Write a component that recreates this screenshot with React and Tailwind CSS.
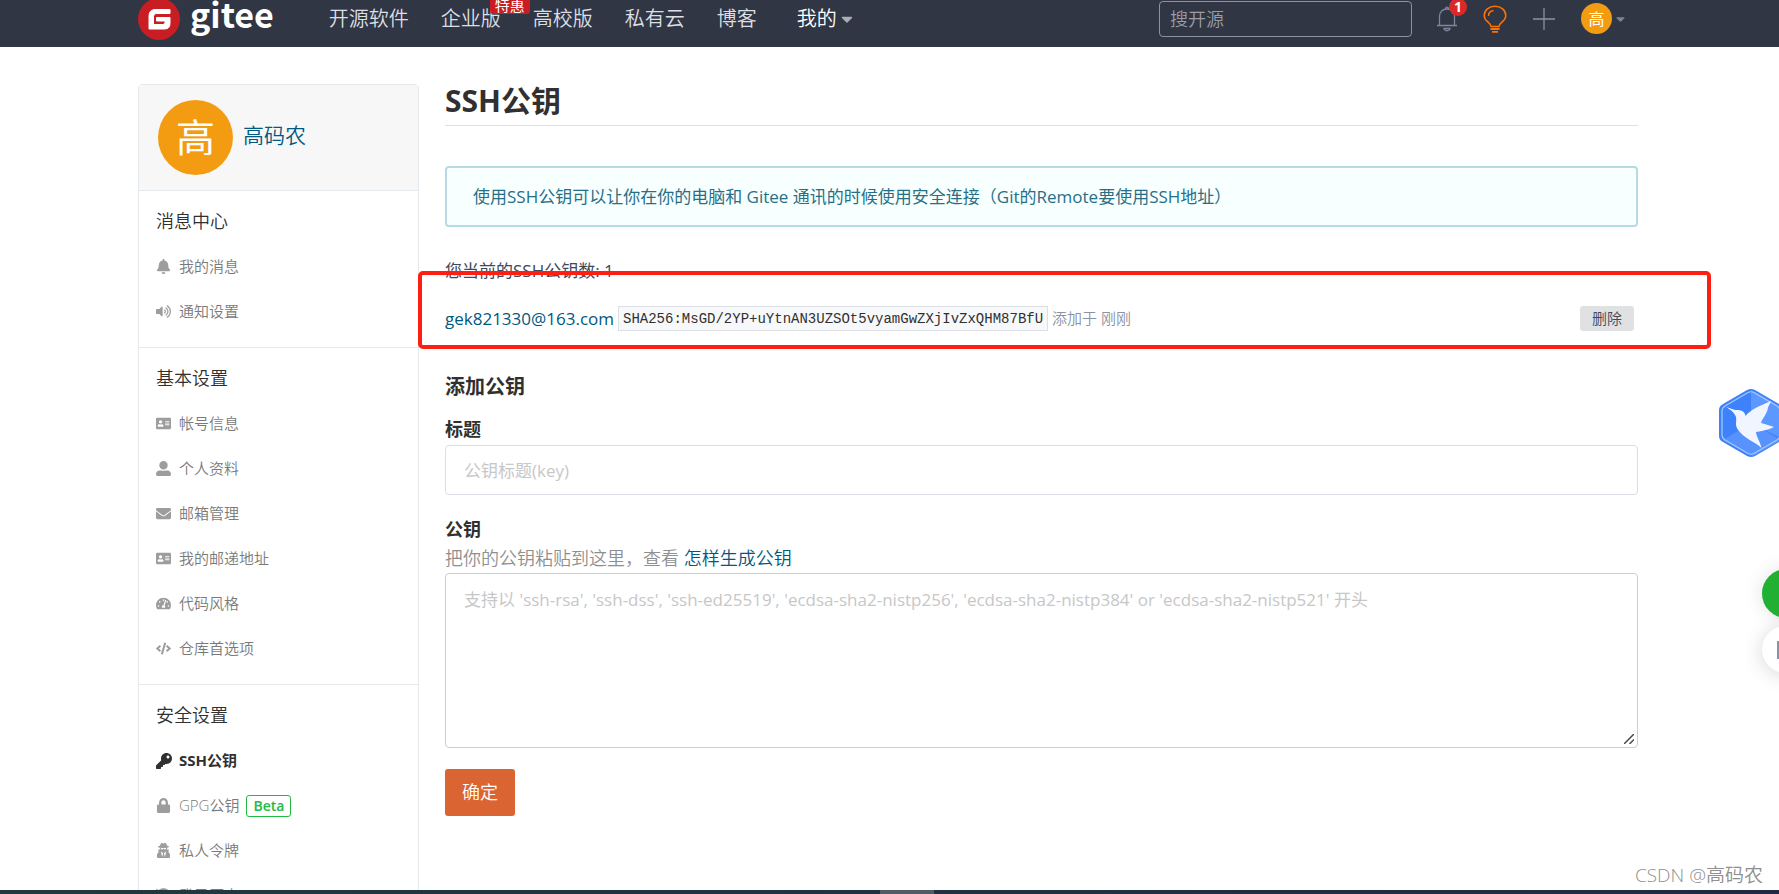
import React from 'react';
import {
    FaBell, FaVolumeUp, FaAddressCard, FaUserAlt, FaEnvelope, FaTachometerAlt,
    FaCode, FaKey, FaLock, FaUserSecret, FaHistory, FaCaretDown,
} from 'react-icons/fa';

const navLinks = ['开源软件', '企业版', '高校版', '私有云', '博客'];

const menuGroups = [
    {
        title: '消息中心',
        items: [
            { label: '我的消息', icon: FaBell },
            { label: '通知设置', icon: FaVolumeUp },
        ],
    },
    {
        title: '基本设置',
        items: [
            { label: '帐号信息', icon: FaAddressCard },
            { label: '个人资料', icon: FaUserAlt },
            { label: '邮箱管理', icon: FaEnvelope },
            { label: '我的邮递地址', icon: FaAddressCard },
            { label: '代码风格', icon: FaTachometerAlt },
            { label: '仓库首选项', icon: FaCode },
        ],
    },
    {
        title: '安全设置',
        items: [
            { label: 'SSH公钥', icon: FaKey, active: true },
            { label: 'GPG公钥', icon: FaLock, beta: true },
            { label: '私人令牌', icon: FaUserSecret },
            { label: '登录历史', icon: FaHistory },
        ],
    },
];

function Logo() {
    return (
        <a href="#" className="flex items-center gap-[10px]">
            <svg viewBox="0 0 42 42" className="h-[42px] w-[42px]">
                <circle cx="21" cy="21" r="21" fill="#c71d23" />
                <path
                    d="M32 11.5H17.5Q11 11.5 11 18V31H26.500Q32 31 32 25.500V19.500H18.500V23H27V24.500Q27 26.500 25 26.500H15.500V18.500Q15.500 15.500 18.500 15.500H32Z"
                    fill="#fff"
                    stroke="#fff"
                    strokeWidth="1"
                    strokeLinejoin="round"
                />
            </svg>
            <span className="pb-[10px] font-['Noto_Sans_CJK_SC',sans-serif] text-[34px] leading-[34px] font-bold text-white">
                gitee
            </span>
        </a>
    );
}

function Header() {
    return (
        <header className="h-[47px] flex-shrink-0 bg-[#303643]">
            <div className="mx-auto flex h-[37px] max-w-[1500px] items-center">
                <Logo />

                <nav className="ml-[55px] flex items-center gap-8 text-[20px] font-[350] text-[#dcdfe4]">
                    {navLinks.map((label) => (
                        <a key={label} href="#" className="relative whitespace-nowrap">
                            {label}
                            {label === '企业版' && (
                                <span className="absolute -right-[29px] -top-[8px] rounded-[3px] bg-[#c71d23] px-[5px] text-[15px] leading-[18px] font-normal text-white">
                                    特惠
                                </span>
                            )}
                        </a>
                    ))}
                    <a href="#" className="flex items-center gap-px pl-2 whitespace-nowrap text-white">
                        我的
                        <FaCaretDown className="text-[18px] text-[#a9adb5]" />
                    </a>
                </nav>

                <div className="ml-auto flex items-center pr-[13px]">
                    <input
                        type="text"
                        aria-label="搜开源"
                        placeholder="搜开源"
                        className="h-[36px] w-[253px] rounded-[4px] border border-[#8c92a4] bg-transparent px-[10px] text-[18px] font-[350] text-white placeholder:text-[#9a9da5]"
                    />

                    {/* Notifications */}
                    <button aria-label="通知" className="relative ml-[24px]">
                        <svg viewBox="0 0 22 26" className="h-[26px] w-[22px]" fill="none" stroke="#7c869c" strokeWidth="1.300">
                            <path d="M1 19.500H21M3.500 19.500V10.500C3.500 6 6.500 3 11 3S18.500 6 18.500 10.500V19.500M9.500 3C9.500 .5 12.500 .5 12.500 3M8 22.500C8.500 25.500 13.500 25.500 14 22.500Z" />
                        </svg>
                        <span className="absolute -right-[9px] -top-[8px] flex h-[18px] w-[18px] items-center justify-center rounded-full bg-[#db2828] text-[14px] leading-none font-bold text-white">
                            1
                        </span>
                    </button>

                    <button aria-label="动态" className="ml-[25px]">
                        <svg viewBox="0 0 24 28" className="h-[28px] w-[24px]" fill="none" stroke="#fe7300" strokeWidth="1.500">
                            <path d="M8 21.500C8 17.500 1.200 16.500 1.200 10.800C1.200 5 6 1.200 12 1.200S22.800 5 22.800 10.800C22.800 16.500 16 17.500 16 21.500Z" />
                            <path d="M5.500 11C5.500 8 7.500 6 10.500 5.500" />
                            <path d="M7.500 24H16.500M9 26.800H15" strokeWidth="1.800" />
                        </svg>
                    </button>

                    <button aria-label="新建" className="ml-[26px]">
                        <svg viewBox="0 0 22 22" className="h-[22px] w-[22px]" stroke="#8c92a4" strokeWidth="1.300">
                            <path d="M0 11H22M11 0V22" />
                        </svg>
                    </button>

                    <button aria-label="帐号" className="ml-[26px] flex items-center gap-1">
                        <span className="flex h-[31px] w-[31px] items-center justify-center rounded-full bg-[#f39c12] text-[16px] text-white">
                            高
                        </span>
                        <FaCaretDown className="w-[9px] text-[14px] text-[#7c8292]" />
                    </button>
                </div>
            </div>
        </header>
    );
}

function Sidebar() {
    return (
        <aside className="w-[281px] flex-shrink-0 rounded-t-[4px] border border-[#e3e9ed]">
            <div className="flex h-[106px] items-center gap-[10px] border-b border-[#e3e9ed] bg-[#f7f7f8] pl-[19px]">
                <span className="flex h-[75px] w-[75px] items-center justify-center rounded-full bg-[#f39c12] text-[39px] text-white">
                    高
                </span>
                <a href="#" className="pb-1 text-[21px] font-[350] text-[#005980]">高码农</a>
            </div>

            {menuGroups.map((group) => (
                <div key={group.title} className="border-b border-[#e9e9ea] pt-4 pb-[13px] pl-4">
                    <h2 className="mb-[9px] pl-px text-[18px] leading-[28px] font-[350] text-[#303030]">{group.title}</h2>
                    <ul>
                        {group.items.map(({ label, icon: Icon, active, beta }) => (
                            <li key={label}>
                                <a
                                    href="#"
                                    className={
                                        active
                                            ? 'flex h-[45px] items-center gap-[7px] text-[15px] font-bold text-[#303030]'
                                            : 'flex h-[45px] items-center gap-[7px] text-[15px] font-[350] text-[#7a7a7a]'
                                    }
                                >
                                    <span className="flex w-[17px] flex-shrink-0 justify-center">
                                        <Icon className={active ? 'h-4 w-auto flex-shrink-0 text-[#303030]' : 'h-[15px] w-auto flex-shrink-0 text-[#9d9d9d]'} />
                                    </span>
                                    {label}
                                    {beta && (
                                        <span className="rounded-[3px] border border-[#21ba45] px-[6px] text-[14px] leading-[20px] font-semibold text-[#21ba45]">
                                            Beta
                                        </span>
                                    )}
                                </a>
                            </li>
                        ))}
                    </ul>
                </div>
            ))}
        </aside>
    );
}

function KeyRow() {
    return (
        <div className="relative mt-[22px] flex h-[25px] items-center whitespace-nowrap">
            <a href="#" className="text-[17px] text-[#005980]">gek821330@163.com</a>
            <code className="ml-1 h-[25px] border border-[#dce0e6] bg-[#f7f8fa] px-1 font-['Liberation_Mono',monospace] text-[14px] leading-[25px] text-[#303030]">
                SHA256:MsGD/2YP+uYtnAN3UZSOt5vyamGwZXjIvZxQHM87BfU
            </code>
            <span className="ml-1 text-[15px] font-[350] text-[#8c92a4]">添加于 刚刚</span>
            <button className="mr-1 ml-auto h-[25px] rounded-[3px] bg-[#e0e1e2] px-3 text-[15px] leading-[25px] font-[350] text-[#40485b]">
                删除
            </button>

            {/* Red highlight around the key */}
            <div className="pointer-events-none absolute -top-[35px] -right-[73px] -bottom-[18px] -left-[27px] rounded-[5px] border-4 border-[#ff1e12]" />
        </div>
    );
}

function KeyForm() {
    return (
        <form className="text-[17px]" onSubmit={(e) => e.preventDefault()}>
            <h3 className="mt-[42px] text-[20px] leading-[28px] font-bold text-[#303030]">添加公钥</h3>

            <label htmlFor="key-title" className="mt-4 block text-[18px] leading-[24px] font-bold text-[#303030]">标题</label>
            <input
                id="key-title"
                type="text"
                placeholder="公钥标题(key)"
                className="mt-1 block h-[50px] w-full rounded-[4px] border border-[#dcdde6] px-[18px] placeholder:text-[#c7c7c7]"
            />

            <label htmlFor="key-body" className="mt-[22px] block text-[18px] leading-[24px] font-bold text-[#303030]">公钥</label>
            <p className="mt-[5px] text-[18px] leading-[24px] font-[350] text-[#8f8f8f]">
                把你的公钥粘贴到这里，查看 <a href="#" className="text-[#005980]">怎样生成公钥</a>
            </p>
            <div className="relative mt-[3px]">
                <textarea
                    id="key-body"
                    placeholder="支持以 'ssh-rsa', 'ssh-dss', 'ssh-ed25519', 'ecdsa-sha2-nistp256', 'ecdsa-sha2-nistp384' or 'ecdsa-sha2-nistp521' 开头"
                    className="block h-[175px] w-full resize-y rounded-[4px] border border-[#cdcdda] px-[18px] py-[14px] leading-[24px] placeholder:text-[#c7c7c7] [&::-webkit-resizer]:hidden"
                />
                <svg viewBox="0 0 10 10" className="pointer-events-none absolute right-[4px] bottom-[4px] h-[10px] w-[10px]" stroke="#4a4a4a" strokeWidth="1.500">
                    <path d="M0 10L10 0M5.500 10L10 5.500" />
                </svg>
            </div>

            <button type="submit" className="mt-[21px] h-[47px] rounded-[3px] bg-[#da6432] px-[17px] text-[18px] font-[350] text-white">
                确定
            </button>
        </form>
    );
}

function FloatingTools() {
    return (
        <div className="absolute top-[388px] right-0 flex w-[60px] flex-col">
            <svg viewBox="0 0 64 70" className="h-[70px] w-[64px] flex-shrink-0">
                <path
                    d="M28 2Q32 0 36 2L60 16Q64 18 64 22V48Q64 52 60 54L36 68Q32 70 28 68L4 54Q0 52 0 48V22Q0 18 4 16Z"
                    fill="#3d82fb"
                />
                <path d="M32 35V2L62 19V50Z" fill="#5c98ff" />
                <path d="M32 35L62 52L34 68L4 52Z" fill="#6a9fff" opacity=".6" />
                <path
                    d="M29 4.500Q32 3 35 4.500L58 18Q61 20 61 23V47Q61 50 58 52L35 65.500Q32 67 29 65.500L6 52Q3 50 3 47V23Q3 20 6 18Z"
                    fill="none"
                    stroke="#a9c8ff"
                    strokeWidth="1.200"
                />
                <path
                    d="M7 19C12 20 14 22 18 22C23 22 26 24 26.500 28C32 21 41 18 52 13C51 16 49 18 48.500 22C47 27 43 31 42 35C47 36 51 38 55 39C49 42 43 43 37 44C37 48 41 53 42.500 60C35 53 26 51 20 43C15 37 18 34 17 29C15 24 12 22 7 19Z"
                    fill="#f1f5ff"
                />
            </svg>
            <div className="mt-[111px] ml-[43px] h-[49px] w-[49px] rounded-full bg-[#22b033] shadow-[0_0_20px_rgba(0,0,0,0.12)]" />
            <div className="mt-[8px] ml-[43px] flex h-[47px] w-[47px] items-center justify-center rounded-full bg-white shadow-[0_2px_20px_rgba(0,0,0,0.16)]">
                <span className="h-[18px] w-[18px] border-2 border-[#8c92a4]" />
            </div>
        </div>
    );
}

export default function App() {
    return (
        <div className="relative flex h-screen flex-col overflow-hidden bg-white font-['Open_Sans','Noto_Sans_CJK_SC',sans-serif]">
            <div className="flex min-h-0 flex-1 flex-col overflow-hidden">
                <div className="bg-[#303643] pr-[3px]">
                    <Header />
                </div>
                <div className="pr-[3px]">
                    <div className="mx-auto mt-[37px] flex max-w-[1500px] gap-[26px]">
                        <Sidebar />

                        <main className="min-w-0 flex-1">
                            <h1 className="border-b border-[#dfe0e2] pb-[7px] text-[30px] leading-[34px] font-bold text-[#303030]">
                                SSH公钥
                            </h1>
                            <div className="mt-10 rounded-[4px] border-2 border-[#b5dbe3] bg-[#f8ffff] px-[26px] text-[17px] leading-[57px] text-[#276f86]">
                                使用SSH公钥可以让你在你的电脑和 Gitee 通讯的时候使用安全连接（Git的Remote要使用SSH地址）
                            </div>
                            <p className="mt-[31px] text-[17px] leading-[26px] text-[#40485b]">您当前的SSH公钥数: 1</p>
                            <KeyRow />
                            <KeyForm />
                        </main>
                    </div>
                </div>
            </div>

            {/* Taskbar edge */}
            <footer className="flex h-1 flex-shrink-0 justify-center bg-linear-to-r from-[#1f3a40] to-[#1e2a45] pl-[35px]">
                <div className="w-[54px] bg-[#4f5d68]" />
            </footer>

            <FloatingTools />
            <p className="absolute right-4 bottom-[6px] text-[19px] leading-[26px] font-[350] text-[#8f8f8f]">CSDN @高码农</p>
        </div>
    );
}
